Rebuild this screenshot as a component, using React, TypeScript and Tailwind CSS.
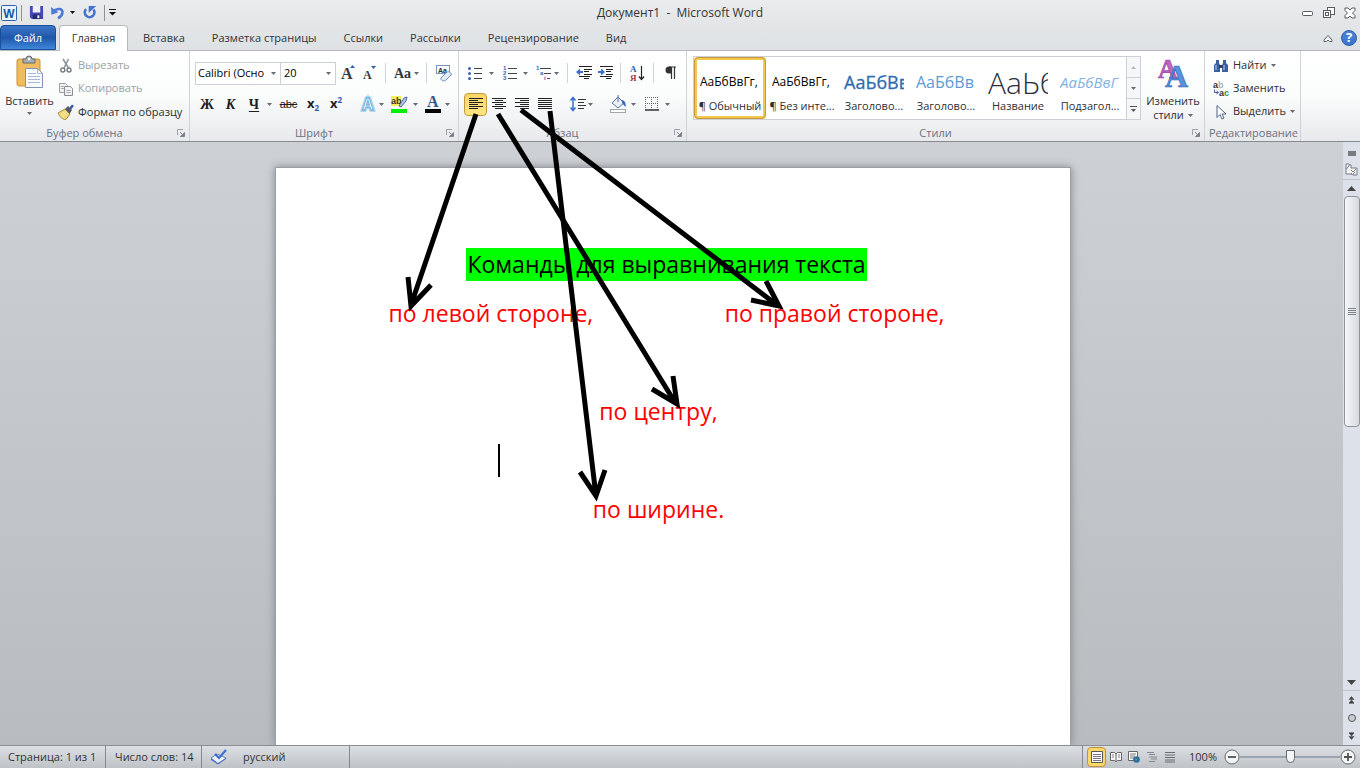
import { useState } from 'react';
import type { ReactNode } from 'react';
import clsx from 'clsx';

function Icon({ className, box = '0 0 16 16', children }: { className?: string; box?: string; children: ReactNode }) {
  return (
    <svg viewBox={box} className={clsx('shrink-0 overflow-visible', className ?? 'h-4 w-4')} fill="none" aria-hidden="true">
      {children}
    </svg>
  );
}

function Caret() {
  return (
    <svg viewBox="0 0 5 3" className="h-[3px] w-[5px] shrink-0" aria-hidden="true">
      <path d="M0 0h5L2.5 3z" fill="#666b72" />
    </svg>
  );
}

function Tool({ label, className, children }: { label: string; className?: string; children: ReactNode }) {
  return (
    <button type="button" aria-label={label} className={clsx('flex h-6 shrink-0 items-center justify-center', className)}>
      {children}
    </button>
  );
}

function Divider() {
  return <span className="h-5 w-px shrink-0 bg-[#d0d4da]" />;
}

function Group({ title, className, launcher = true, children }: { title: string; className: string; launcher?: boolean; children: ReactNode }) {
  return (
    <section className={clsx('flex shrink-0 flex-col border-r border-[#cfd3d9]', className)}>
      <div className="h-[74px]">{children}</div>
      <div className="flex h-4 items-center px-1 text-[#6b7280]">
        <span className={clsx('flex-1 text-center', launcher && 'pr-3')}>{title}</span>
        {launcher && (
          <button type="button" aria-label={`Параметры: ${title}`}>
            <Icon className="h-2 w-2" box="0 0 8 8">
              <path d="M.5 6V.5H6" stroke="#9aa0a8" />
              <path d="M3 3l3 3M7.500 3.500v4h-4z" stroke="#7d838b" fill="#7d838b" />
            </Icon>
          </button>
        )}
      </div>
    </section>
  );
}

/* Four kinds of text lines, drawn from their start and end points */
const alignLines = {
  left: [[0, 14], [0, 9], [0, 14], [0, 9], [0, 14], [0, 9]],
  center: [[0, 14], [3, 11], [0, 14], [3, 11], [0, 14], [3, 11]],
  right: [[0, 14], [5, 14], [0, 14], [5, 14], [0, 14], [5, 14]],
  justify: [[0, 14], [0, 14], [0, 14], [0, 14], [0, 14], [0, 14]],
};

function AlignIcon({ kind }: { kind: keyof typeof alignLines }) {
  return (
    <Icon className="h-3 w-[14px]" box="0 0 14 12">
      {alignLines[kind].map(([from, to], i) => (
        <path key={i} d={`M${from} ${i * 2 + 0.5}H${to}`} stroke="#222" />
      ))}
    </Icon>
  );
}

function TitleBar() {
  return (
    <header className="flex h-[25px] items-center bg-linear-to-b from-[#ebeced] to-[#e3e5e7] pr-1 pl-px">
      <div className="flex w-[195px] items-center">
        <Icon className="h-4 w-4" box="0 0 16 16">
          <rect x=".5" y=".5" width="15" height="15" rx="1" fill="#eaf3fc" stroke="#2c66a9" />
          <text x="8" y="12.500" textAnchor="middle" fontFamily="Liberation Sans" fontWeight="700" fontSize="12" fill="#1659a5">W</text>
        </Icon>
        <span className="ml-1 h-4 w-px bg-[#8d9299]" />
        <Tool label="Сохранить" className="ml-[7px]">
          <Icon className="h-[15px] w-[15px]">
            <path d="M1 1h14v14H3l-2-2z" fill="#4447b5" />
            <path d="M4 1h8v7H4z" fill="#eef1fb" />
            <path d="M4 10h8v5H4z" fill="#292b72" />
            <path d="M9 11h2v3H9z" fill="#fff" />
          </Icon>
        </Tool>
        <Tool label="Отменить" className="ml-[7px]">
          <Icon className="h-[14px] w-[14px]">
            <path d="M3 6.500C7 1.500 14 3 13 8c-.5 3-3 5-5 6" stroke="#4b7ad0" strokeWidth="3" />
            <path d="M0 1l.5 9 8-3z" fill="#4b7ad0" />
          </Icon>
        </Tool>
        <Icon className="ml-[5px] h-[3px] w-[5px]" box="0 0 5 3"><path d="M0 0h5L2.500 3z" fill="#111" /></Icon>
        <Tool label="Повторить" className="ml-2">
          <Icon className="h-[14px] w-[14px]">
            <path d="M3.500 3.500A5.500 5.500 0 1 0 12 4" stroke="#4573cc" strokeWidth="3" />
            <path d="M6.500 8V0H15z" fill="#4573cc" />
          </Icon>
        </Tool>
        <span className="ml-[7px] h-4 w-px bg-[#8d9299]" />
        <Tool label="Настройка панели быстрого доступа" className="ml-1">
          <Icon className="h-[7px] w-[7px]" box="0 0 7 7">
            <path d="M0 .5h7" stroke="#111" />
            <path d="M0 3h7L3.500 6.500z" fill="#111" />
          </Icon>
        </Tool>
      </div>
      <h1 className="flex-1 text-center text-[12px] whitespace-pre text-[#333]">Документ1  -  Microsoft Word</h1>
      <div className="flex w-[192px] items-center justify-end gap-[9px]">
        <Tool label="Свернуть">
          <Icon className="h-3 w-3" box="0 0 12 12"><rect x=".5" y="4.500" width="10" height="4" rx="1" fill="#fff" stroke="#565b66" /></Icon>
        </Tool>
        <Tool label="Свернуть в окно">
          <Icon className="h-3 w-3" box="0 0 12 12">
            <rect x="4.500" y=".5" width="7" height="7" fill="#fff" stroke="#565b66" />
            <rect x=".5" y="3.500" width="7" height="7" fill="#fff" stroke="#565b66" />
            <rect x="2.500" y="5.500" width="3" height="3" stroke="#565b66" />
          </Icon>
        </Tool>
        <Tool label="Закрыть">
          <Icon className="h-3 w-3" box="0 0 12 12">
            <path d="M1 1h3l2 2 2-2h3v2.500L8.500 6 11 8.500V11H8L6 9l-2 2H1V8.500L3.500 6 1 3.500z" fill="#fff" stroke="#565b66" />
          </Icon>
        </Tool>
      </div>
    </header>
  );
}

const tabs = ['Вставка', 'Разметка страницы', 'Ссылки', 'Рассылки', 'Рецензирование', 'Вид'];

function TabBar() {
  return (
    <nav className="flex h-[26px] items-stretch border-b border-[#b5b9be] bg-linear-to-b from-[#e3e5e7] to-[#dee2e5]">
      <button type="button" className="w-14 rounded-t-sm border border-[#1a4f9c] bg-linear-to-b from-[#3d76c9] via-[#1f57ab] to-[#3f86da] pt-px text-white">
        Файл
      </button>
      <button type="button" className="-mb-px ml-[3px] w-[69px] rounded-t-sm border border-b-0 border-[#b5b9be] bg-white text-[#333]">
        Главная
      </button>
      <div className="ml-[15px] flex gap-[27px] pt-[2px] text-[#333]">
        {tabs.map((tab) => (
          <button type="button" key={tab}>{tab}</button>
        ))}
      </div>
      <div className="ml-auto flex items-center gap-2 pr-[3px]">
        <button type="button" aria-label="Свернуть ленту">
          <Icon className="h-2 w-[10px]" box="0 0 10 8">
            <path d="M1 6l4-4.500L9 6v1.500H6.500L5 6 3.500 7.500H1z" fill="#fff" stroke="#565b66" />
          </Icon>
        </button>
        <button type="button" aria-label="Справка" className="flex h-4 w-4 items-center justify-center rounded-full border border-[#2c5cab] bg-linear-to-b from-[#4c83d4] to-[#3a76cf] text-[13px] font-bold text-white">
          ?
        </button>
      </div>
    </nav>
  );
}

function ClipboardGroup() {
  return (
    <Group title="Буфер обмена" className="w-[190px]">
      <div className="flex pl-[6px]">
        <button type="button" className="flex w-[47px] flex-col items-center pt-1">
          <Icon className="h-[34px] w-7" box="0 0 28 34">
            <rect x="1" y="4" width="23" height="27" rx="2" fill="#f0bd5e" stroke="#c8923b" />
            <path d="M7 4h3a3 3 0 0 1 6 0h3v4H7z" fill="#a9afb8" stroke="#646a73" />
            <circle cx="13" cy="4" r="1.200" fill="#fff" />
            <path d="M9.500 13.500h12l5 5v14h-17z" fill="#f8fafd" stroke="#7f93b2" />
            <path d="M21.500 13.500v5h5M12 18.500h8M12 21.500h12M12 24.500h12M12 27.500h12" stroke="#a5b8d6" />
          </Icon>
          <span className="mt-1 leading-4">Вставить</span>
          <span className="flex h-2 items-center"><Caret /></span>
        </button>
        <div className="flex flex-col pt-[3px] pl-[5px]">
          <button type="button" disabled className="flex h-[23px] items-center gap-1 text-[#9aa0a6]">
            <Icon className="h-4 w-4">
              <path d="M5 1l5.500 9M10.500 1L6 10" stroke="#8f949b" strokeWidth="1.600" />
              <circle cx="4.800" cy="12" r="2" stroke="#777c83" strokeWidth="1.400" />
              <circle cx="11" cy="12" r="2" stroke="#777c83" strokeWidth="1.400" />
            </Icon>
            Вырезать
          </button>
          <button type="button" disabled className="flex h-[23px] items-center gap-1 text-[#9aa0a6]">
            <Icon className="h-4 w-4">
              <path d="M1.500 2.500h6l2 2v7h-8z" fill="#f1f1f2" stroke="#9b9fa5" />
              <path d="M6.500 5.500h6l2 2v7h-8z" fill="#f1f1f2" stroke="#8b8f95" />
              <path d="M3 5.500h3M3 7.500h3M8.500 9.500h4M8.500 11.500h4" stroke="#a9adb2" />
            </Icon>
            Копировать
          </button>
          <button type="button" className="flex h-6 items-center gap-1">
            <Icon className="h-4 w-4">
              <path d="M0 9l7-4 5 5-4 5.500c-4 0-6-2.500-8-6.500z" fill="#f2d97c" stroke="#a98a38" />
              <path d="M3 10l3 3M5 8l3 3" stroke="#fdf3c4" />
              <path d="M7 5l3-3 4 4-2.500 4z" fill="#54596b" />
              <path d="M11 4l3-3.500L16 2l-3 3.500z" fill="#3a5ba8" />
            </Icon>
            Формат по образцу
          </button>
        </div>
      </div>
    </Group>
  );
}

function FontGroup() {
  return (
    <Group title="Шрифт" className="w-[269px]">
      <div className="flex h-[34px] items-end pl-[5px]">
        <label className="flex h-[23px] w-[86px] items-center border border-[#cdd1d7] bg-white pr-1 pl-[2px] text-black">
          <input aria-label="Шрифт" defaultValue="Calibri (Осно" className="w-full min-w-0 outline-none" />
          <Caret />
        </label>
        <label className="-ml-px flex h-[23px] w-[56px] items-center border border-[#cdd1d7] bg-white pr-1 pl-[3px] text-black">
          <input aria-label="Размер шрифта" defaultValue="20" className="w-full min-w-0 outline-none" />
          <Caret />
        </label>
        <Tool label="Увеличить размер" className="ml-[5px]">
          <Icon className="h-[18px] w-4" box="0 0 16 18">
            <text x="0" y="15" fontFamily="Liberation Serif" fontWeight="700" fontSize="16" fill="#383b42">A</text>
            <path d="M9 4h5l-2.500-3z" fill="#3460a8" />
          </Icon>
        </Tool>
        <Tool label="Уменьшить размер" className="ml-[5px]">
          <Icon className="h-[18px] w-4" box="0 0 16 18">
            <text x="1" y="15" fontFamily="Liberation Serif" fontWeight="700" fontSize="12" fill="#383b42">A</text>
            <path d="M9 2h5l-2.500 3z" fill="#3460a8" />
          </Icon>
        </Tool>
        <span className="ml-[7px] flex h-6 items-center"><Divider /></span>
        <Tool label="Регистр" className="ml-2 gap-[3px]">
          <span className="font-['Liberation_Serif',serif] text-[14px] font-bold text-[#33363c]">Aa</span>
          <Caret />
        </Tool>
        <span className="ml-[7px] flex h-6 items-center"><Divider /></span>
        <Tool label="Очистить формат" className="ml-2">
          <Icon className="h-[18px] w-[18px]" box="0 0 18 18">
            <rect x="1.500" y="1.500" width="13" height="8" fill="#fff" stroke="#7b93bd" />
            <text x="3" y="8.500" fontFamily="Liberation Sans" fontWeight="700" fontSize="7" fill="#252a38">Aa</text>
            <path d="M6 14l6-6c2-1 5 1 4 3l-5 5c-2 2-6 0-5-2z" fill="#e4ebf7" stroke="#7189b5" />
          </Icon>
        </Tool>
      </div>
      <div className="flex h-[31px] items-center pt-[7px] pl-[5px] text-[#1e1e1e]">
        <Tool label="Полужирный" className="w-6"><b className="font-['Liberation_Serif',serif] text-[14px]">Ж</b></Tool>
        <Tool label="Курсив" className="w-[23px]"><b className="font-['Liberation_Serif',serif] text-[14px] italic">К</b></Tool>
        <Tool label="Подчеркнутый" className="w-[34px] gap-2 pl-[3px]"><b className="font-['Liberation_Serif',serif] text-[14px] underline underline-offset-2">Ч</b><Caret /></Tool>
        <Tool label="Зачеркнутый" className="w-[25px]"><span className="font-['Liberation_Sans',sans-serif] text-[11px] line-through">abc</span></Tool>
        <Tool label="Подстрочный знак" className="w-6"><b className="text-[13px]">x</b><b className="pt-2 text-[8px] text-[#2c5aa8]">2</b></Tool>
        <Tool label="Надстрочный знак" className="w-[22px]"><b className="text-[13px]">x</b><b className="pb-2 text-[8px] text-[#2c5aa8]">2</b></Tool>
        <span className="ml-1"><Divider /></span>
        <Tool label="Текстовые эффекты" className="ml-2 gap-1">
          <Icon className="h-4 w-4">
            <text x="3" y="14" fontFamily="Liberation Sans" fontWeight="700" fontSize="16" fill="#fff" stroke="#a5d2f0" strokeWidth="3.500">A</text>
            <text x="3" y="14" fontFamily="Liberation Sans" fontWeight="700" fontSize="16" fill="#fff" stroke="#5ba3d8" strokeWidth=".8">A</text>
          </Icon>
          <Caret />
        </Tool>
        <Tool label="Цвет выделения текста" className="ml-[7px] gap-[5px]">
          <Icon className="h-[18px] w-[17px]" box="0 0 17 18">
            <rect width="10" height="10" y="1" fill="#f7ee58" />
            <text x="0" y="9" fontFamily="Liberation Sans" fontWeight="700" fontSize="9" fill="#333">ab</text>
            <path d="M8 11l5-8 3-1-1 4-5 6z" fill="#b9c7e2" stroke="#4f6593" />
            <rect y="14" width="16" height="4" fill="#00f000" />
          </Icon>
          <Caret />
        </Tool>
        <Tool label="Цвет текста" className="ml-[7px] gap-1">
          <Icon className="h-[18px] w-4" box="0 0 16 18">
            <text x="2" y="12" fontFamily="Liberation Serif" fontWeight="700" fontSize="16" fill="#31568f">A</text>
            <rect y="14" width="16" height="4" fill="#000" />
          </Icon>
          <Caret />
        </Tool>
      </div>
    </Group>
  );
}

function ParagraphGroup() {
  const [align, setAlign] = useState<keyof typeof alignLines>('left');
  const alignLabels = { left: 'По левому краю', center: 'По центру', right: 'По правому краю', justify: 'По ширине' };

  return (
    <Group title="Абзац" className="w-[228px]">
      <div className="flex h-[34px] items-end pl-[9px]">
        <Tool label="Маркеры" className="gap-[5px]">
          <Icon className="h-4 w-4">
            <path d="M6 3.500h8M6 8.500h8M6 13.500h8" stroke="#444" />
            <circle cx="1.500" cy="3.500" r="1.500" fill="#3b62b0" />
            <circle cx="1.500" cy="8.500" r="1.500" fill="#3b62b0" />
            <circle cx="1.500" cy="13.500" r="1.500" fill="#3b62b0" />
          </Icon>
          <Caret />
        </Tool>
        <Tool label="Нумерация" className="ml-2 gap-[5px]">
          <Icon className="h-4 w-4">
            <path d="M6 3.500h9M6 8.500h9M6 13.500h9" stroke="#444" />
            <g fontFamily="Liberation Sans" fontWeight="700" fontSize="6" fill="#3b62b0">
              <text x="1" y="5">1</text><text x="1" y="10">2</text><text x="1" y="15">3</text>
            </g>
          </Icon>
          <Caret />
        </Tool>
        <Tool label="Многоуровневый список" className="ml-2 gap-[2px]">
          <Icon className="h-4 w-4">
            <path d="M4 3.500h11M8 8.500h7M11 13.500h3" stroke="#444" />
            <g fontFamily="Liberation Sans" fontWeight="700" fontSize="6" fill="#3b62b0">
              <text x="0" y="5">1</text><text x="4" y="10">a</text><text x="8" y="15">i</text>
            </g>
          </Icon>
          <Caret />
        </Tool>
        <span className="ml-2 flex h-6 items-center"><Divider /></span>
        <Tool label="Уменьшить отступ" className="ml-2">
          <Icon className="h-4 w-4">
            <path d="M3 1.500h13M8 4.500h8M8 6.500h5M8 9.500h8M3 11.500h11M8 13.500h5" stroke="#222" />
            <path d="M0 7l4-3.500v2.500h3v2H4v2.500z" fill="#3a70cc" />
          </Icon>
        </Tool>
        <Tool label="Увеличить отступ" className="ml-[6px]">
          <Icon className="h-4 w-4">
            <path d="M2 1.500h13M8 4.500h7M8 6.500h5M8 9.500h7M2 11.500h12M8 13.500h5" stroke="#222" />
            <path d="M7 7L3 3.500v2.500H0v2h3v2.500z" fill="#3a70cc" />
          </Icon>
        </Tool>
        <span className="ml-[6px] flex h-6 items-center"><Divider /></span>
        <Tool label="Сортировка" className="ml-[9px]">
          <Icon className="h-[17px] w-[15px]" box="0 0 15 17">
            <text x="0" y="7" fontFamily="Liberation Serif" fontWeight="700" fontSize="9" fill="#2f5ba8">А</text>
            <text x="0" y="16" fontFamily="Liberation Serif" fontWeight="700" fontSize="9" fill="#a0403c">Я</text>
            <path d="M11.500 1v13M9 11.500l2.500 3 2.500-3" stroke="#222" strokeWidth="1.200" />
          </Icon>
        </Tool>
        <span className="ml-2 flex h-6 items-center"><Divider /></span>
        <Tool label="Отобразить все знаки" className="ml-[11px]">
          <Icon className="h-[14px] w-[11px]" box="0 0 11 14">
            <path d="M4 1h7M6.500 1v12M9.500 1v12" stroke="#333" strokeWidth="1.200" />
            <path d="M6 .5H4a3 3 0 0 0 0 7h2z" fill="#333" />
          </Icon>
        </Tool>
      </div>
      <div className="flex h-[31px] items-center pt-[7px] pl-[5px]">
        {(Object.keys(alignLines) as (keyof typeof alignLines)[]).map((kind) => (
          <button
            type="button"
            key={kind}
            aria-label={alignLabels[kind]}
            aria-pressed={align === kind}
            onClick={() => setAlign(kind)}
            className={clsx(
              'flex h-[23px] w-[23px] items-center justify-center rounded-sm border',
              align === kind ? 'border-[#c29a3d] bg-linear-to-b from-[#fbd569] to-[#fee582]' : 'border-transparent',
            )}
          >
            <AlignIcon kind={kind} />
          </button>
        ))}
        <span className="ml-[6px]"><Divider /></span>
        <Tool label="Интервал" className="ml-2 gap-[2px]">
          <Icon className="h-4 w-4">
            <path d="M8 3.500h8M8 6.500h6M8 9.500h8M8 12.500h6" stroke="#333" />
            <path d="M3 2v12M.5 4.500L3 1.500l2.500 3M.5 11.500l2.500 3 2.500-3" stroke="#3a70cc" strokeWidth="1.500" />
          </Icon>
          <Caret />
        </Tool>
        <span className="ml-[9px]"><Divider /></span>
        <Tool label="Заливка" className="ml-2 gap-[5px]">
          <Icon className="h-[18px] w-4" box="0 0 16 18">
            <path d="M2 8l6-6 6 6-6 5z" fill="#e9eff9" stroke="#56719f" />
            <path d="M8 7V0" stroke="#56719f" />
            <path d="M12 5c4 1 4 5 3.500 7-1.500-1-2-3-3.500-4z" fill="#3668bd" />
            <rect x=".5" y="14.500" width="15" height="3" fill="#fff" stroke="#a2a6ac" />
          </Icon>
          <Caret />
        </Tool>
        <Tool label="Границы" className="ml-[9px] gap-[6px]">
          <Icon className="h-[14px] w-[14px]" box="0 0 14 14">
            <path d="M.5 0v13M6.500 0v13M12.500 0v13M0 .5h13M0 6.500h13" stroke="#666" strokeDasharray="1 1" />
            <path d="M0 13h14" stroke="#333" strokeWidth="1.500" />
          </Icon>
          <Caret />
        </Tool>
      </div>
    </Group>
  );
}

const styles = [
  { name: '¶ Обычный', sample: 'АаБбВвГг,', look: 'text-[12px] text-black' },
  { name: '¶ Без инте...', sample: 'АаБбВвГг,', look: 'text-[12px] text-black' },
  { name: 'Заголово...', sample: 'АаБбВвГг', look: 'text-[18px] text-[#2e6db0] [-webkit-text-stroke:0.3px]' },
  { name: 'Заголово...', sample: 'АаБбВв', look: 'text-[16px] text-[#5b9bd5]' },
  { name: 'Название', sample: 'АаЬб', look: 'text-[30px] font-light text-[#27323f]' },
  { name: 'Подзагол...', sample: 'АаБбВвГ', look: 'text-[15px] italic text-[#7fb2de]' },
];

function StylesGroup() {
  const [current, setCurrent] = useState(0);

  return (
    <Group title="Стили" className="w-[518px]">
      <div className="flex gap-1 pt-[5px] pl-[6px]">
        <div className="flex h-16 border border-[#cdd1d7] bg-white">
          {styles.map((style, i) => (
            <button
              type="button"
              key={i}
              aria-pressed={i === current}
              onClick={() => setCurrent(i)}
              className={clsx('h-[62px] w-[72px] rounded-sm border-[3px] text-left', i === current ? 'border-[#f4c64f] outline-1 -outline-offset-1 outline-[#c8993a]' : 'border-transparent')}
            >
              <span className={clsx('mx-[3px] flex h-9 items-center overflow-hidden whitespace-nowrap', style.look)}>{style.sample}</span>
              <span className="block text-center leading-3 whitespace-nowrap">{style.name}</span>
            </button>
          ))}
          <div className="flex w-[14px] flex-col divide-y divide-[#cdd1d7] border-l border-[#cdd1d7] bg-[#f6f7f9]">
            <button type="button" aria-label="Вверх" className="flex flex-1 items-center justify-center">
              <Icon className="h-[3px] w-[5px]" box="0 0 5 3"><path d="M0 3h5L2.500 0z" fill="#b9bdc3" /></Icon>
            </button>
            <button type="button" aria-label="Вниз" className="flex flex-1 items-center justify-center"><Caret /></button>
            <button type="button" aria-label="Дополнительно" className="flex flex-1 items-center justify-center">
              <Icon className="h-[7px] w-[7px]" box="0 0 7 7"><path d="M0 .5h7" stroke="#555" /><path d="M1 3h5L3.500 6z" fill="#555" /></Icon>
            </button>
          </div>
        </div>
        <button type="button" className="flex w-14 flex-col items-center">
          <Icon className="h-[38px] w-8" box="0 0 32 38">
            <text x="1" y="22" fontFamily="Liberation Serif" fontWeight="700" fontSize="27" fill="#c065c6" stroke="#8d3a96" strokeWidth=".6">A</text>
            <text x="8" y="31" fontFamily="Liberation Serif" fontWeight="700" fontSize="32" fill="#5a92de" stroke="#2a5caa" strokeWidth=".6">A</text>
          </Icon>
          <span className="leading-[14px] whitespace-nowrap">Изменить</span>
          <span className="flex items-center gap-1 leading-[14px]">стили <Caret /></span>
        </button>
      </div>
    </Group>
  );
}

function EditingGroup() {
  return (
    <Group title="Редактирование" className="w-24" launcher={false}>
      <div className="flex flex-col items-start pt-[3px] pl-2">
        <button type="button" className="flex h-[23px] items-center gap-1">
          <Icon className="h-4 w-4">
            <path d="M3 2h3v3l1 2v7H1V7l2-2zM10 2h3v3l2 2v7H9V7l1-2z" fill="#3b5f9f" />
            <path d="M6 7h4v3H6z" fill="#27406f" />
            <path d="M3 7v5M11 7v5" stroke="#c4d4ee" />
          </Icon>
          Найти
          <span className="ml-px"><Caret /></span>
        </button>
        <button type="button" className="flex h-[23px] items-center gap-1">
          <Icon className="h-4 w-4">
            <g fontFamily="Liberation Sans" fontWeight="700" fontSize="9">
              <text x="0" y="7" fill="#333">a</text><text x="5" y="7" fill="#aeb2b8">b</text>
              <text x="6" y="15" fill="#333">a</text><text x="11" y="15" fill="#1f9a2e">c</text>
            </g>
            <path d="M1.500 8.500v3H5M3.500 10l2 1.500-2 1.500" stroke="#3a62a8" />
          </Icon>
          Заменить
        </button>
        <button type="button" className="flex h-[23px] items-center gap-1">
          <Icon className="h-4 w-4">
            <path d="M4 1.500v12l3-3 2 4.500 2-1-2-4h4z" fill="#fff" stroke="#4f6488" />
          </Icon>
          Выделить
          <Caret />
        </button>
      </div>
    </Group>
  );
}

function ScrollBar() {
  return (
    <div className="flex w-[17px] shrink-0 flex-col items-center bg-[#dde1e9]">
      <button type="button" aria-label="Разделить" className="mt-[9px] h-[5px] w-2 bg-[#777b80]" />
      <button type="button" aria-label="Линейка" className="mt-[7px]">
        <Icon className="h-[13px] w-[13px]" box="0 0 13 13">
          <path d="M1 1h3l1 1h1v3h6v7H8l-1-1H1z" fill="#f4f4f5" stroke="#777b83" />
          <path d="M1.500 6l3-4M6 7l2 2 3-3M6 10l1.500 2L10 9" stroke="#777b83" />
        </Icon>
      </button>
      <span className="mt-[3px] h-px w-full bg-[#bfc4cd]" />
      <button type="button" aria-label="Прокрутить вверх" className="flex h-4 items-center justify-center">
        <Icon className="h-[5px] w-[9px]" box="0 0 9 5"><path d="M0 5h9L4.500 0z" fill="#444" /></Icon>
      </button>
      <div className="flex h-[231px] w-4 flex-col items-center justify-center gap-px rounded-sm border border-[#8f959e] bg-linear-to-r from-[#f7f8fa] to-[#d5d9df]">
        <span className="h-px w-2 bg-[#80858d]" />
        <span className="h-px w-2 bg-[#80858d]" />
        <span className="h-px w-2 bg-[#80858d]" />
        <span className="h-px w-2 bg-[#80858d]" />
      </div>
      <button type="button" aria-label="Прокрутить вниз" className="mt-auto flex h-4 items-center justify-center">
        <Icon className="h-[5px] w-[9px]" box="0 0 9 5"><path d="M0 0h9L4.500 5z" fill="#444" /></Icon>
      </button>
      <div className="flex h-[55px] w-full flex-col items-center justify-around border-t border-[#bfc4cd]">
        <button type="button" aria-label="Предыдущая страница">
          <Icon className="h-2 w-[7px]" box="0 0 7 8"><path d="M1 3.500h5L3.500.5zM1 7h5L3.500 4zM1 7.500h5" fill="#444" stroke="#444" strokeWidth=".5" /></Icon>
        </button>
        <button type="button" aria-label="Выбор объекта перехода" className="h-2 w-2 rounded-full border border-[#555] bg-[#c9cdd3]" />
        <button type="button" aria-label="Следующая страница">
          <Icon className="h-2 w-[7px]" box="0 0 7 8"><path d="M1 1h5L3.500 4zM1 4.500h5l-2.500 3zM1 .5h5" fill="#444" stroke="#444" strokeWidth=".5" /></Icon>
        </button>
      </div>
    </div>
  );
}

function DocumentArea() {
  return (
    <main className="flex min-h-0 flex-1 bg-linear-to-b from-[#cdd0d4] to-[#b8bbbf]">
      <div className="flex min-w-0 flex-1 justify-center overflow-hidden pt-[25px] pl-[2px]">
        <article className="flex w-[796px] shrink-0 flex-col gap-4 border border-b-0 border-[#9ba0a6] bg-white pt-20 pr-[125px] pl-[113px] text-center text-[23px] leading-[33px] text-[#f00] shadow-[0_0_8px_#80858b]">
          <p className="text-black"><mark className="inline-block bg-[#0f0] px-px text-black">Команды для выравнивания текста</mark></p>
          <p className="flex justify-between"><span>по левой стороне,</span><span>по правой стороне,</span></p>
          <p className="h-[33px]" />
          <p className="pr-4">по центру,</p>
          <p className="flex h-[33px] pl-[109px]"><span className="w-[2px] bg-black" /></p>
          <p className="pr-4">по ширине.</p>
        </article>
      </div>
      <ScrollBar />
    </main>
  );
}

/* Hand-drawn pointers from the alignment buttons to their names on the page */
function Pointers() {
  return (
    <svg className="pointer-events-none absolute top-0 left-0" width="960" height="540" viewBox="0 0 960 540" fill="none" stroke="#000" strokeWidth="5" aria-hidden="true">
      <path d="M476 114L411 305M408 277l3 29 20-21" />
      <path d="M498 114L676 404M673 376l4 28-25-15" />
      <path d="M521 110L777 305M766 281l13 25-28-6" />
      <path d="M550 111L596 496M580 472l16 24 9-26" />
    </svg>
  );
}

function StatusDivider() {
  return <span className="h-full w-px bg-[#85898f]" />;
}

function StatusBar() {
  const [zoom, setZoom] = useState(100);

  return (
    <footer className="flex h-[23px] items-center border-t border-[#8a8e94] bg-linear-to-b from-[#dcdfe3] to-[#bfc3c8] text-[#333]">
      <span className="w-[105px] pl-2 whitespace-nowrap">Страница: 1 из 1</span>
      <StatusDivider />
      <span className="w-[95px] pl-[9px] whitespace-nowrap">Число слов: 14</span>
      <StatusDivider />
      <button type="button" aria-label="Проверка правописания" className="ml-2">
        <Icon className="h-4 w-[18px]" box="0 0 18 16">
          <path d="M1 9l6-4 9 4-8 6z" fill="#eef3fb" stroke="#6b83b3" />
          <path d="M1 9v2l7 4.500 8-5.500V9l-8 5z" fill="#4a74c4" />
          <path d="M5 5l4 4 7-8" stroke="#3c6fce" strokeWidth="2.200" />
        </Icon>
      </button>
      <span className="ml-[15px] w-[106px]">русский</span>
      <StatusDivider />
      <span className="ml-auto h-full w-px bg-[#85898f]" />
      <button type="button" aria-label="Разметка страницы" className="ml-1 flex h-5 w-[19px] items-center justify-center rounded-sm border border-[#c2913a] bg-[#fbd969]">
        <Icon className="h-3 w-3" box="0 0 12 12"><path d="M.5.5h11v11H.5z" fill="#fff" stroke="#555" /><path d="M2 3.500h8M2 5.500h8M2 7.500h8M2 9.500h8" stroke="#777" /></Icon>
      </button>
      <div className="ml-1 flex items-center gap-[6px]">
        <button type="button" aria-label="Режим чтения">
          <Icon className="h-3 w-3" box="0 0 12 12"><path d="M.5 1.500h4L6 3l1.500-1.500h4v8h-4L6 11 4.500 9.500h-4zM6 3v8" fill="#f5f5f5" stroke="#666" /><path d="M2 4h2M2 6h2M8 4h2M8 6h2" stroke="#888" /></Icon>
        </button>
        <button type="button" aria-label="Веб-документ">
          <Icon className="h-3 w-3" box="0 0 12 12"><path d="M.5.5h9v9h-9z" fill="#fff" stroke="#666" /><path d="M2 3h6M2 5h5M2 7h4" stroke="#777" /><circle cx="8.500" cy="8.500" r="3.300" fill="#2c6ba3" /><path d="M7 7l2 1-1 2z" fill="#5fba58" /></Icon>
        </button>
        <button type="button" aria-label="Структура">
          <Icon className="h-3 w-3" box="0 0 12 12"><path d="M1 1.500h7M3 3.500h6M3 6h8M5 8h6M3 10.500h6" stroke="#85898e" /></Icon>
        </button>
        <button type="button" aria-label="Черновик">
          <Icon className="h-3 w-3" box="0 0 12 12"><path d="M1 1.500h10M1 4h10M1 6.500h10M1 9h10M1 11h10" stroke="#6a6e73" /></Icon>
        </button>
      </div>
      <span className="ml-[13px] w-[35px]">{zoom}%</span>
      <button type="button" aria-label="Уменьшить" onClick={() => setZoom(zoom - 10)}>
        <Icon className="h-4 w-4"><circle cx="8" cy="8" r="7" fill="#f4f5f6" stroke="#666a70" /><path d="M4 8h8" stroke="#555" strokeWidth="1.800" /></Icon>
      </button>
      <input
        type="range"
        aria-label="Масштаб"
        min={10}
        max={190}
        value={zoom}
        onChange={(e) => setZoom(Number(e.target.value))}
        className="h-4 w-[100px] appearance-none bg-transparent [&::-webkit-slider-runnable-track]:h-[2px] [&::-webkit-slider-runnable-track]:bg-[#9ba4b0] [&::-webkit-slider-thumb]:-mt-[6px] [&::-webkit-slider-thumb]:h-[13px] [&::-webkit-slider-thumb]:w-[9px] [&::-webkit-slider-thumb]:appearance-none [&::-webkit-slider-thumb]:rounded-b-md [&::-webkit-slider-thumb]:border [&::-webkit-slider-thumb]:border-[#666a70] [&::-webkit-slider-thumb]:bg-[#f4f5f6]"
      />
      <button type="button" aria-label="Увеличить" className="mr-1" onClick={() => setZoom(zoom + 10)}>
        <Icon className="h-4 w-4"><circle cx="8" cy="8" r="7" fill="#f4f5f6" stroke="#666a70" /><path d="M4 8h8M8 4v8" stroke="#555" strokeWidth="1.800" /></Icon>
      </button>
    </footer>
  );
}

export default function App() {
  return (
    <div className="relative flex h-screen flex-col overflow-hidden font-['Open_Sans','Noto_Sans',sans-serif] text-[11px] text-[#2d2f33]">
      <TitleBar />
      <TabBar />
      <div className="flex h-[91px] shrink-0 overflow-hidden border-b border-[#868b91] bg-linear-to-b from-white via-[#fbfcfc] to-[#e7e9ec]">
        <ClipboardGroup />
        <FontGroup />
        <ParagraphGroup />
        <StylesGroup />
        <EditingGroup />
      </div>
      <DocumentArea />
      <StatusBar />
      <Pointers />
    </div>
  );
}
